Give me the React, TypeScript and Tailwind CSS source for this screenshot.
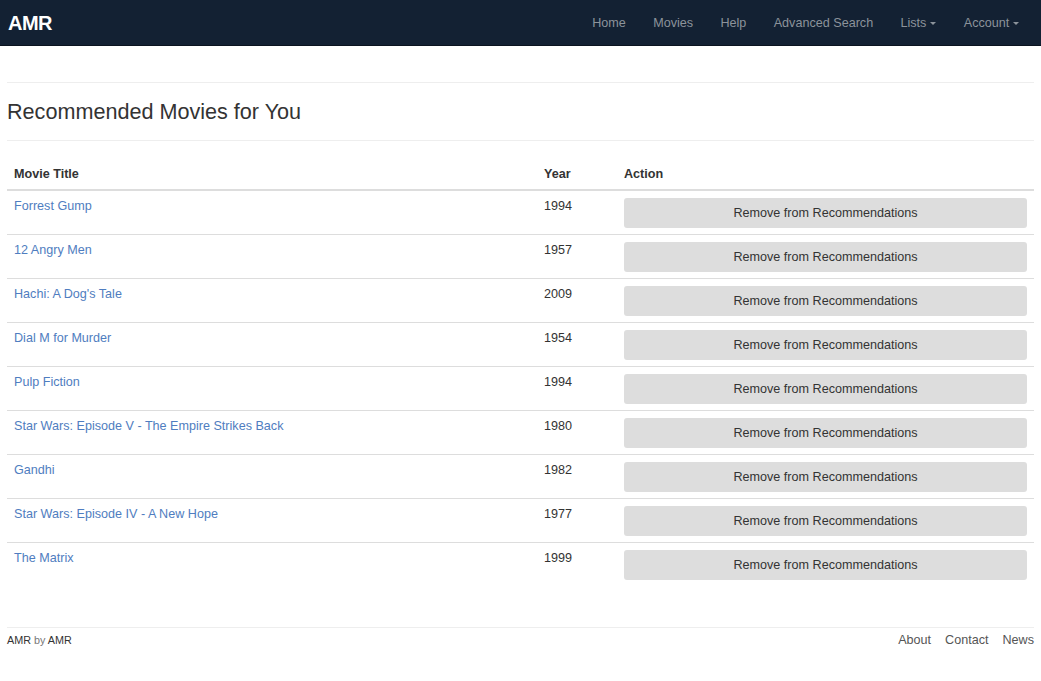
import React from 'react';

const movies = [
  { title: 'Forrest Gump', year: 1994 },
  { title: '12 Angry Men', year: 1957 },
  { title: "Hachi: A Dog's Tale", year: 2009 },
  { title: 'Dial M for Murder', year: 1954 },
  { title: 'Pulp Fiction', year: 1994 },
  { title: 'Star Wars: Episode V - The Empire Strikes Back', year: 1980 },
  { title: 'Gandhi', year: 1982 },
  { title: 'Star Wars: Episode IV - A New Hope', year: 1977 },
  { title: 'The Matrix', year: 1999 },
];

function Caret() {
  return <span className="ml-1 inline-block align-middle border-x-[3.5px] border-t-[3.5px] border-x-transparent border-t-[#8c939b]"></span>;
}

export default function App() {
  return (
    <div className="min-h-[681px] bg-white text-[12.6px] leading-[18px] text-[#333] font-['Liberation_Sans',Arial,sans-serif]">
      <nav className="h-[46px] bg-[#132133] border-b border-[#0b1420] flex items-center justify-between">
        <a className="pl-2 text-[20px] font-bold text-white tracking-tight">AMR</a>
        <ul className="flex items-center h-full pr-[8px] text-[12.6px] text-[#8c939b]">
          <li className="px-[13.7px]">Home</li>
          <li className="px-[13.7px]">Movies</li>
          <li className="px-[13.7px]">Help</li>
          <li className="px-[13.7px]">Advanced Search</li>
          <li className="px-[13.7px]">Lists<Caret /></li>
          <li className="px-[13.7px]">Account<Caret /></li>
        </ul>
      </nav>

      <main className="px-[7px]">
        <hr className="mt-9 border-t border-[#eee]" />
        <h2 className="mt-[16px] mb-[15px] text-[21.6px] leading-[26px] text-[#333]">Recommended Movies for You</h2>
        <hr className="border-t border-[#eee]" />

        <table className="mt-[16px] w-full border-collapse">
          <thead>
            <tr className="border-b-2 border-[#ddd] text-left">
              <th className="w-[530px] px-[7px] pt-[8px] pb-[6px] font-bold">Movie Title</th>
              <th className="w-[80px] px-[7px] pt-[8px] pb-[6px] font-bold">Year</th>
              <th className="px-[7px] pt-[8px] pb-[6px] font-bold">Action</th>
            </tr>
          </thead>
          <tbody>
            {movies.map((m, i) => (
              <tr key={m.title} className={i < movies.length - 1 ? 'border-b border-[#ddd]' : ''}>
                <td className="px-[7px] pt-[6px] pb-[6px] align-top">
                  <a className="text-[#4f7dc0]">{m.title}</a>
                </td>
                <td className="px-[7px] pt-[6px] pb-[6px] align-top">{m.year}</td>
                <td className="px-[7px] pt-[7px] pb-[6px] align-top">
                  <button className="block w-full h-[30px] pb-[1px] rounded-[3px] bg-[#dddddd] text-[12.6px] text-[#333]">
                    Remove from Recommendations
                  </button>
                </td>
              </tr>
            ))}
          </tbody>
        </table>

        <footer className="mt-[41px] border-t border-[#eee] pt-[3px] flex justify-between items-start">
          <p className="text-[10.8px] text-[#777]"><span className="text-[#333]">AMR</span> by <span className="text-[#333]">AMR</span></p>
          <ul className="flex gap-[14px] text-[12.6px] text-[#555]">
            <li>About</li>
            <li>Contact</li>
            <li>News</li>
          </ul>
        </footer>
      </main>
    </div>
  );
}
